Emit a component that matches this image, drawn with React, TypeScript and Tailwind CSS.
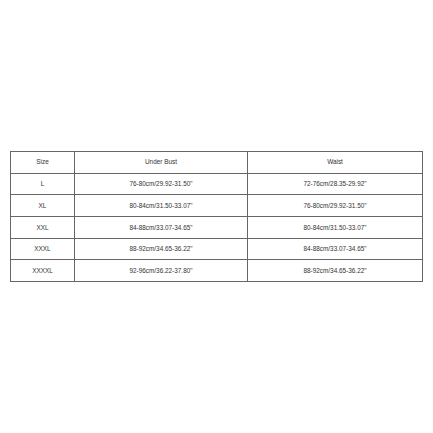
const rows = [
  ['L', '76-80cm/29.92-31.50"', '72-76cm/28.35-29.92"'],
  ['XL', '80-84cm/31.50-33.07"', '76-80cm/29.92-31.50"'],
  ['XXL', '84-88cm/33.07-34.65"', '80-84cm/31.50-33.07"'],
  ['XXXL', '88-92cm/34.65-36.22"', '84-88cm/33.07-34.65"'],
  ['XXXXL', '92-96cm/36.22-37.80"', '88-92cm/34.65-36.22"'],
];

const cell = 'border border-[#666] text-center font-normal p-0';

export default function App() {
  return (
    <div className="w-[433px] h-[433px] bg-white flex items-center justify-center font-['Liberation_Sans',Arial,sans-serif]">
      <table className="w-[412px] border-collapse text-[6.4px] text-[#333] table-fixed">
        <colgroup>
          <col className="w-[64px]" />
          <col className="w-[173px]" />
          <col className="w-[175px]" />
        </colgroup>
        <thead>
          <tr className="h-[21.7px]">
            <th className={cell}>Size</th>
            <th className={cell}>Under Bust</th>
            <th className={cell}>Waist</th>
          </tr>
        </thead>
        <tbody>
          {rows.map(r => (
            <tr key={r[0]} className="h-[21.7px]">
              {r.map((c, i) => (
                <td key={i} className={cell}>{c}</td>
              ))}
            </tr>
          ))}
        </tbody>
      </table>
    </div>
  );
}
